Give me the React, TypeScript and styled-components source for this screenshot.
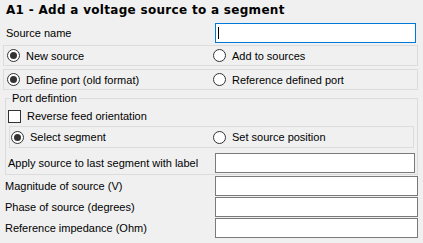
import styled, { createGlobalStyle } from "styled-components";

const Global = createGlobalStyle`
  body {
    margin: 0;
    background: #f0f0f0;
    font-family: "Liberation Sans", Arial, sans-serif;
    font-size: 11px;
    color: #000;
  }
`;

const Panel = styled.div`
  width: 423px;
  height: 243px;
  display: flex;
  flex-direction: column;
  background: #f0f0f0;
`;

const Title = styled.div`
  height: 20px;
  line-height: 20px;
  padding-left: 6px;
  font-family: "DejaVu Sans", "Liberation Sans", sans-serif;
  font-weight: bold;
  font-size: 12px;
  letter-spacing: 0.3px;
`;

/* label on the left, field starting at x=215 */
const FieldRow = styled.div<{ $top?: number; $left: number; $label: number; $width: number }>`
  display: grid;
  grid-template-columns: ${({ $label }) => $label}px ${({ $width }) => $width}px;
  align-items: center;
  height: 20px;
  margin-top: ${({ $top = 1 }) => $top}px;
  padding-left: ${({ $left }) => $left}px;
`;

const Label = styled.span`
  white-space: nowrap;
`;

const TextBox = styled.div<{ $focused?: boolean }>`
  box-sizing: border-box;
  height: 20px;
  background: #fff;
  border: 1px solid ${({ $focused }) => ($focused ? "#0078d7" : "#7a7a7a")};
  position: relative;
`;

const Caret = styled.span`
  position: absolute;
  left: 2px;
  top: 3px;
  width: 1px;
  height: 12px;
  background: #000;
`;

/* a framed row holding two radio buttons */
const RadioBox = styled.div<{ $top: number; $x: number; $w: number; $pad: number; $split: number; $h?: number }>`
  box-sizing: border-box;
  display: grid;
  grid-template-columns: ${({ $split }) => $split}px 1fr;
  align-items: center;
  height: ${({ $h = 21 }) => $h}px;
  width: ${({ $w }) => $w}px;
  margin-top: ${({ $top }) => $top}px;
  margin-left: ${({ $x }) => $x}px;
  padding-left: ${({ $pad }) => $pad}px;
  border: 1px solid #dcdcdc;
`;

const Option = styled.label`
  display: flex;
  align-items: center;
  gap: 6px;
  white-space: nowrap;
`;

const RadioMark = styled.span<{ $checked?: boolean }>`
  box-sizing: border-box;
  width: 13px;
  height: 13px;
  border-radius: 50%;
  border: 1px solid #333;
  background: #fff;
  display: flex;
  align-items: center;
  justify-content: center;

  &::after {
    content: "";
    width: 7px;
    height: 7px;
    border-radius: 50%;
    background: #333;
    display: ${({ $checked }) => ($checked ? "block" : "none")};
  }
`;

const CheckMark = styled.span`
  box-sizing: border-box;
  width: 13px;
  height: 13px;
  border: 1px solid #333;
  background: #fff;
`;

const Group = styled.div`
  position: relative;
  box-sizing: border-box;
  margin: 8px 0 0 5px;
  width: 413px;
  height: 77px;
  border: 1px solid #dcdcdc;
  padding-top: 8px;
`;

const Legend = styled.span`
  position: absolute;
  top: -8px;
  left: 4px;
  padding: 0 2px;
  background: #f0f0f0;
  line-height: 15px;
`;

const CheckRow = styled.div`
  display: flex;
  align-items: center;
  gap: 6px;
  height: 18px;
  padding-left: 2px;
`;

const Radio = ({ text, checked }: { text: string; checked?: boolean }) => (
  <Option>
    <RadioMark $checked={checked} />
    {text}
  </Option>
);

export default function App() {
  return (
    <Panel>
      <Global />
      <Title>A1 - Add a voltage source to a segment</Title>
      <FieldRow $top={3} $left={6} $label={209} $width={201}>
        <Label>Source name</Label>
        <TextBox $focused>
          <Caret />
        </TextBox>
      </FieldRow>
      <RadioBox $top={2} $x={3} $w={415} $pad={3} $split={206}>
        <Radio text="New source" checked />
        <Radio text="Add to sources" />
      </RadioBox>
      <RadioBox $top={3} $x={3} $w={415} $pad={3} $split={206}>
        <Radio text="Define port (old format)" checked />
        <Radio text="Reference defined port" />
      </RadioBox>
      <Group>
        <Legend>Port defintion</Legend>
        <CheckRow>
          <CheckMark />
          Reverse feed orientation
        </CheckRow>
        <RadioBox $top={1} $x={3} $w={405} $pad={1} $split={202} $h={22}>
          <Radio text="Select segment" checked />
          <Radio text="Set source position" />
        </RadioBox>
        <FieldRow $top={5} $left={2} $label={207} $width={200}>
          <Label>Apply source to last segment with label</Label>
          <TextBox />
        </FieldRow>
      </Group>
      <FieldRow $top={1} $left={5} $label={210} $width={203}>
        <Label>Magnitude of source (V)</Label>
        <TextBox />
      </FieldRow>
      <FieldRow $top={1} $left={5} $label={210} $width={203}>
        <Label>Phase of source (degrees)</Label>
        <TextBox />
      </FieldRow>
      <FieldRow $top={1} $left={5} $label={210} $width={203}>
        <Label>Reference impedance (Ohm)</Label>
        <TextBox />
      </FieldRow>
    </Panel>
  );
}
